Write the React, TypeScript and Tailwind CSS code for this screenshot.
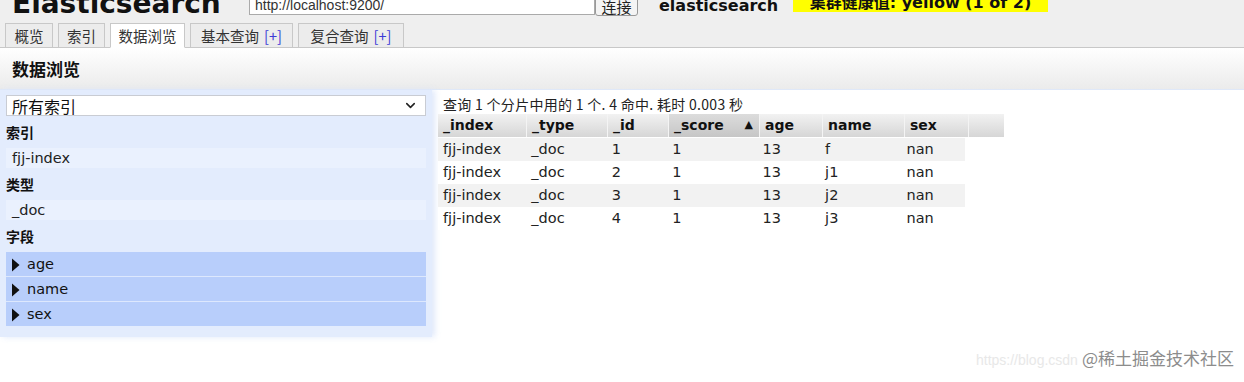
import { ChevronDown } from "lucide-react";

const tabs = [
  { label: "概览", w: "w-[48px]" },
  { label: "索引", w: "w-[47px]" },
  { label: "数据浏览", w: "w-[75px]", active: true },
  { label: "基本查询", w: "w-[103px]", plus: true },
  { label: "复合查询", w: "w-[106px]", plus: true },
];

const cols = [
  { key: "_index", w: "w-[89px]" },
  { key: "_type", w: "w-[81px]" },
  { key: "_id", w: "w-[61px]" },
  { key: "_score", w: "w-[91px]", sorted: true },
  { key: "age", w: "w-[63px]" },
  { key: "name", w: "w-[82px]" },
  { key: "sex", w: "w-[64px]" },
];

const rows = [
  ["fjj-index", "_doc", "1", "1", "13", "f", "nan"],
  ["fjj-index", "_doc", "2", "1", "13", "j1", "nan"],
  ["fjj-index", "_doc", "3", "1", "13", "j2", "nan"],
  ["fjj-index", "_doc", "4", "1", "13", "j3", "nan"],
];

function Label({ text }: { text: string }) {
  return <div className="flex h-[32px] items-center font-['Noto_Sans_CJK_SC',sans-serif] text-[14px] font-bold text-[#111]">{text}</div>;
}

function Item({ text }: { text: string }) {
  return <div className="flex h-[20px] items-center bg-[#eaf1fe] pl-[6px] pt-px text-[14.5px] text-[#222]">{text}</div>;
}

export default function App() {
  return (
    <div className="relative h-[382px] w-[1244px] overflow-hidden bg-white font-['DejaVu_Sans','Noto_Sans_CJK_SC',sans-serif] text-[#222]">
      <div className="bg-[#efefef]">
        <div className="flex h-[18px] items-end overflow-hidden">
          <div className="ml-[12px] w-[237px] text-[28px] font-bold leading-none text-[#111]">Elasticsearch</div>
          <div className="mb-[3px] flex h-[30px] w-[346px] items-end border border-[#aaa] bg-white pb-[2px] pl-[5px] font-['Liberation_Sans',sans-serif] text-[14px] leading-none text-[#333]">http://localhost:9200/</div>
          <button className="mb-[2px] flex h-[30px] w-[43px] items-end justify-center rounded-[3px] border border-[#999] bg-[#f4f4f4] pb-[1px] font-['Noto_Sans_CJK_SC',sans-serif] text-[15px] leading-none text-[#222]">连接</button>
          <div className="mb-[4px] ml-[21px] w-[134px] text-[16px] font-bold leading-none text-[#111]">elasticsearch</div>
          <div className="mb-[6px] flex h-[30px] w-[255px] items-end justify-center bg-[#ffff00] pb-[1px] text-[16px] font-bold leading-none text-[#111]">集群健康值: yellow (1 of 2)</div>
        </div>
        <div className="mt-[5px] flex gap-[5px] border-b border-[#c8c8c8] pl-[5px]">
          {tabs.map((t) => (
            <div
              key={t.label}
              className={`${t.w} -mb-px flex h-[25px] items-center justify-center border border-[#c8c8c8] font-['Noto_Sans_CJK_SC',sans-serif] text-[14.5px] text-[#333] ${t.active ? "border-b-white bg-white" : "bg-[#ececec]"}`}
            >
              {t.label}
              {t.plus ? <span className="ml-[5px] text-[#3a3ad6]">[+]</span> : null}
            </div>
          ))}
        </div>
      </div>

      <div className="flex h-[41px] items-center bg-gradient-to-b from-white to-[#ebebeb] pl-[12px] font-['Noto_Sans_CJK_SC',sans-serif] text-[17px] font-bold text-[#111]">数据浏览</div>

      <div className="flex border-t border-[#dfe8f8]">
        <div className="w-[432px] bg-[#e3ecfd] px-[6px] pb-[11px] pt-[5px] shadow-[3px_0_6px_rgba(220,230,250,0.9)]">
          <div className="flex h-[21px] items-center justify-between border border-[#c9ccd3] bg-white pl-[5px] pr-[7px] font-['Noto_Sans_CJK_SC',sans-serif] text-[16px] leading-none text-[#111]">
            <span>所有索引</span>
            <ChevronDown size={15} strokeWidth={2.5} className="text-[#222]" />
          </div>
          <Label text="索引" />
          <Item text="fjj-index" />
          <Label text="类型" />
          <Item text="_doc" />
          <Label text="字段" />
          <div className="flex w-[420px] flex-col gap-px bg-[#dde8fd]">
            {["age", "name", "sex"].map((f) => (
              <div key={f} className="flex h-[24px] items-center bg-[#b8cefb] pl-[5px] pt-px text-[14.5px] text-[#111]">
                <svg width="9" height="14" viewBox="0 0 9 14" className="mr-[7px]">
                  <path d="M1 0.5 L8.5 7 L1 13.5 Z" fill="#111" />
                </svg>
                {f}
              </div>
            ))}
          </div>
        </div>

        <div className="flex-1 pl-[6px] pt-[4px]">
          <div className="ml-[5px] h-[20px] font-['Noto_Sans_CJK_SC',sans-serif] text-[14px] leading-[20px] tracking-[0.3px] text-[#222]">查询 1 个分片中用的 1 个. 4 命中. 耗时 0.003 秒</div>
          <div className="flex h-[23px]">
            {cols.map((c) => (
              <div
                key={c.key}
                className={`${c.w} flex items-center justify-between border-r border-[#f4f4f4] px-[5px] text-[14px] font-bold text-[#111] ${c.sorted ? "bg-gradient-to-b from-[#dcdcdc] to-[#c6c6c6]" : "bg-gradient-to-b from-[#f2f2f2] to-[#d6d6d6]"}`}
              >
                <span>{c.key}</span>
                {c.sorted ? <span className="mr-[1px] text-[11px]">▲</span> : null}
              </div>
            ))}
            <div className="w-[35px] bg-gradient-to-b from-[#f2f2f2] to-[#d6d6d6]" />
          </div>
          <div className="mt-px">
            {rows.map((r, i) => (
              <div key={i} className={`flex h-[23px] w-[527px] items-center ${i % 2 === 0 ? "bg-[#f2f2f2]" : "bg-white"}`}>
                {r.map((v, j) => (
                  <div key={j} className={`${cols[j].w} pl-[5px] text-[14.5px] text-[#222]`}>{v}</div>
                ))}
              </div>
            ))}
          </div>
        </div>
      </div>

      <div className="absolute right-[10px] top-[345px] flex items-end">
        <span className="mr-[4px] font-['Liberation_Sans',sans-serif] text-[14px] text-[#e8e8e8]">https://blog.csdn</span>
        <span className="font-['Noto_Sans_CJK_SC',sans-serif] text-[17px] text-[#8c8c8c] [text-shadow:0_0_2px_white,0_0_2px_white]">@稀土掘金技术社区</span>
      </div>
    </div>
  );
}
